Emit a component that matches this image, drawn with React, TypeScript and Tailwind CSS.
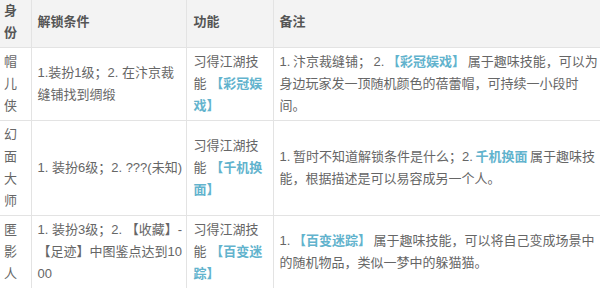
import React from "react";

const L = ({ children }: { children: React.ReactNode }) => (
  <span className="font-bold text-[#62b3cd]">{children}</span>
);

export default function App() {
  const base = "border-b border-r border-[#e3e3e3] align-middle break-all";
  const th = base + " bg-[#f3f3f3] text-left font-bold text-[#555] pt-0 pb-[3px]";
  const td = base + " text-[#666] py-[3px]";
  const c1 = " pl-[4px] pr-[8px]";
  const c2 = " pl-[6px] pr-0";
  const c3 = " pl-[7px] pr-[8px]";
  const c4 = " pl-[6px] pr-0 border-r-0 whitespace-nowrap overflow-hidden [word-spacing:-1px]";
  return (
    <div
      className="w-[600px] h-[288px] bg-white overflow-hidden text-[13px] leading-[22px]"
      style={{ fontFamily: '"Liberation Sans", "Noto Sans CJK SC", sans-serif' }}
    >
      <table className="w-[600px] table-fixed border-collapse">
        <colgroup>
          <col className="w-[31px]" />
          <col className="w-[155px]" />
          <col className="w-[87px]" />
          <col className="w-[327px]" />
        </colgroup>
        <thead>
          <tr>
            <th className={th + c1}>身份</th>
            <th className={th + c2}>解锁条件</th>
            <th className={th + c3}>功能</th>
            <th className={th + c4}>备注</th>
          </tr>
        </thead>
        <tbody>
          <tr>
            <td className={td + c1}>帽儿侠</td>
            <td className={td + c2}>1.装扮1级；2. 在汴京裁缝铺找到绸缎</td>
            <td className={td + c3}>
              习得江湖技能 <L>【彩冠娱戏】</L>
            </td>
            <td className={td + c4}>
              1. 汴京裁缝铺； 2. <L>【彩冠娱戏】</L> 属于趣味技能，可以为
              <br />
              身边玩家发一顶随机颜色的蓓蕾帽，可持续一小段时
              <br />
              间。
            </td>
          </tr>
          <tr>
            <td className={td + c1}>幻面大师</td>
            <td className={td + c2}>1. 装扮6级；2. ???(未知)</td>
            <td className={td + c3}>
              习得江湖技能 <L>【千机换面】</L>
            </td>
            <td className={td + c4}>
              1. 暂时不知道解锁条件是什么；2. <L>千机换面</L> 属于趣味技
              <br />
              能，根据描述是可以易容成另一个人。
            </td>
          </tr>
          <tr>
            <td className={td + c1}>匿影人</td>
            <td className={td + c2}>1. 装扮3级；2. 【收藏】-【足迹】中图鉴点达到1000</td>
            <td className={td + c3}>
              习得江湖技能 <L>【百变迷踪】</L>
            </td>
            <td className={td + c4}>
              1. <L>【百变迷踪】</L> 属于趣味技能，可以将自己变成场景中
              <br />
              的随机物品，类似一梦中的躲猫猫。
            </td>
          </tr>
        </tbody>
      </table>
    </div>
  );
}
